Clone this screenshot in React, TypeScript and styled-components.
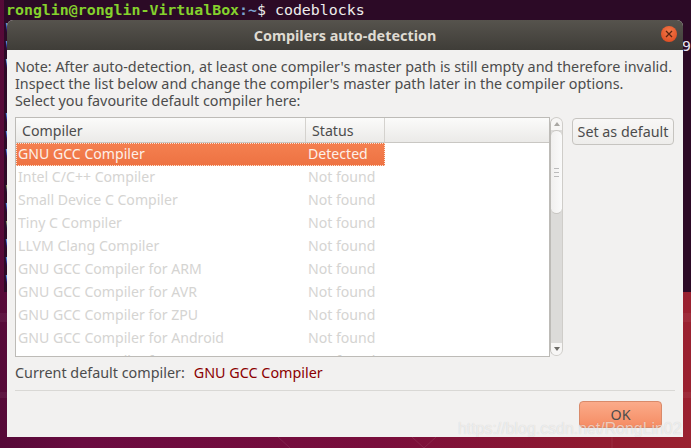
import { createGlobalStyle } from 'styled-components';
import styled from 'styled-components';

const Global = createGlobalStyle`
  html, body { margin: 0; padding: 0; width: 691px; height: 448px; overflow: hidden; }
  #root { width: 691px; height: 448px; }
`;

const Desktop = styled.div`
  position: relative;
  width: 691px;
  height: 448px;
  overflow: hidden;
  background:
    linear-gradient(transparent 313px, rgba(255,255,255,0.05) 313px, rgba(255,255,255,0.05) 322px, transparent 322px),
    linear-gradient(transparent 392px, rgba(255,255,255,0.05) 392px, rgba(255,255,255,0.05) 398px, transparent 398px),
    linear-gradient(90deg, #560a38 0%, #6a0b40 12%, #790e3c 55%, #8f1a30 85%, #9a2130 100%);
`;

const Facets = styled.svg`
  position: absolute;
  left: 0;
  top: 0;
`;

const Terminal = styled.div`
  height: 291px;
  margin: 0 0 0 4px;
  padding: 1px 0 0 2px;
  background: #2c0a26;
  font-family: "DejaVu Sans Mono", monospace;
  font-size: 14.9px;
  line-height: 18px;
  white-space: pre;
  color: #eeeeec;
`;

const Prompt = styled.span`
  color: #85d12d;
  font-weight: 700;
`;

const Path = styled.span`
  color: #7da3cf;
  font-weight: 700;
`;

const OutputLine = styled.div<{ $color: string }>`
  display: flex;
  justify-content: space-between;
  height: 18px;
  color: ${p => p.$color};
`;

const OutputTail = styled.span`
  color: #e4e4f0;
`;

const DialogWindow = styled.div`
  position: absolute;
  left: 7px;
  top: 20px;
  width: 676px;
  height: 417px;
  display: flex;
  flex-direction: column;
  background: #f2f1f0;
  border-radius: 6px 6px 0 0;
  font-family: "Noto Sans", sans-serif;
  color: #4c4c4c;
`;

const TitleBar = styled.div`
  flex: none;
  position: relative;
  height: 30px;
  display: flex;
  align-items: center;
  justify-content: center;
  background: linear-gradient(#56534d, #3f3d38);
  border-radius: 6px 6px 0 0;
  color: #dfdbd2;
  font-size: 14.4px;
  font-weight: 700;
`;

const CloseButton = styled.div`
  position: absolute;
  right: 6px;
  top: 6px;
  width: 16px;
  height: 16px;
  border-radius: 50%;
  background: radial-gradient(circle at 50% 35%, #f47a4a, #d9431a);
  display: flex;
  align-items: center;
  justify-content: center;
`;

const Body = styled.div`
  flex: 1;
  display: flex;
  flex-direction: column;
  padding: 8px 8px 0 8px;
`;

const Note = styled.div`
  font-size: 14.35px;
  line-height: 17px;
  white-space: pre;
`;

const ListRow = styled.div`
  display: flex;
  margin-top: 8px;
`;

const ListBox = styled.div`
  position: relative;
  width: 533px;
  height: 238px;
  flex: none;
  background: #fff;
  border: 1px solid #bdbbb7;
  overflow: hidden;
`;

const HeaderRow = styled.div`
  display: flex;
  height: 24px;
  background: linear-gradient(#fbfbfa, #ebeae8);
  border-bottom: 1px solid #c9c7c3;
`;

const HeaderCell = styled.div<{ $w: number }>`
  width: ${p => p.$w}px;
  flex: none;
  padding-left: 6px;
  box-sizing: border-box;
  border-right: 1px solid #d4d2ce;
  font-size: 14.2px;
  line-height: 25px;
`;

const Row = styled.div<{ $selected?: boolean }>`
  display: flex;
  width: 369px;
  height: 23px;
  box-sizing: border-box;
  font-size: 14.1px;
  line-height: 20px;
  color: ${p => (p.$selected ? '#fdf0e8' : '#d5d4d2')};
  background: ${p => (p.$selected ? 'linear-gradient(#f47f4f, #ee7343)' : 'transparent')};
  border: 1px ${p => (p.$selected ? 'dotted #fbe3d6' : 'solid transparent')};
`;

const NameCell = styled.div`
  width: 290px;
  flex: none;
  padding-left: 1px;
`;

const StatusCell = styled.div`
  flex: 1;
`;

const Scrollbar = styled.div`
  position: relative;
  flex: none;
  width: 13px;
  height: 239px;
  box-sizing: border-box;
  border: 1px solid #cfcdc9;
  border-left-color: #bdbbb7;
  border-radius: 7px;
  background: #dcdbd9;
  overflow: hidden;
`;

const Stepper = styled.div<{ $end: 'top' | 'bottom' }>`
  position: absolute;
  left: 0;
  right: 0;
  height: 12px;
  ${p => (p.$end === 'top' ? 'top: 0;' : 'bottom: 0;')}
  background: #f7f6f5;
  display: flex;
  align-items: center;
  justify-content: center;
  &::after {
    content: '';
    border-left: 3px solid transparent;
    border-right: 3px solid transparent;
    ${p => (p.$end === 'top' ? 'border-bottom: 4px solid #a9a7a3;' : 'border-top: 4px solid #6e6c68;')}
  }
`;

const Thumb = styled.div`
  position: absolute;
  left: 0;
  right: 0;
  top: 12px;
  height: 82px;
  background: linear-gradient(90deg, #f1f0ef, #fafafa);
  border: 1px solid #c8c6c2;
  border-left: none;
  border-right: none;
  border-radius: 6px;
  display: flex;
  align-items: center;
  justify-content: center;
  &::after {
    content: '';
    width: 5px;
    height: 7px;
    border-top: 1px solid #bbb;
    border-bottom: 1px solid #bbb;
    background: linear-gradient(transparent 43%, #bbb 43%, #bbb 57%, transparent 57%);
  }
`;

const SideButton = styled.button`
  margin: 1px 0 0 9px;
  width: 102px;
  height: 27px;
  padding: 0;
  background: linear-gradient(#f8f7f6, #eeedeb);
  border: 1px solid #c6c4c0;
  border-radius: 4px;
  font-family: inherit;
  font-size: 14.3px;
  color: #4c4c4c;
`;

const CurrentRow = styled.div`
  display: flex;
  gap: 9px;
  margin-top: 6px;
  font-size: 14.35px;
  line-height: 20px;
`;

const CurrentValue = styled.span`
  color: #8b0000;
`;

const Divider = styled.div`
  margin-top: 7px;
  height: 1px;
  background: #d9d8d5;
`;

const Footer = styled.div`
  display: flex;
  justify-content: flex-end;
  padding: 10px 13px 0 0;
`;

const OkButton = styled.button`
  width: 83px;
  height: 27px;
  padding: 0;
  background: linear-gradient(#fbab8a, #f58c63);
  border: 1px solid #d98a6a;
  border-radius: 4px;
  font-family: inherit;
  font-size: 14.3px;
  color: #4c4c4c;
`;

const Watermark = styled.div`
  position: absolute;
  left: 458px;
  top: 419px;
  font-family: "Liberation Sans", sans-serif;
  font-size: 15.9px;
  line-height: 20px;
  white-space: pre;
  color: rgba(255, 255, 255, 0.6);
  text-shadow: 0 0 1px rgba(0, 0, 0, 0.16);
`;

const compilers = [
  'Intel C/C++ Compiler',
  'Small Device C Compiler',
  'Tiny C Compiler',
  'LLVM Clang Compiler',
  'GNU GCC Compiler for ARM',
  'GNU GCC Compiler for AVR',
  'GNU GCC Compiler for ZPU',
  'GNU GCC Compiler for Android',
  'GNU GCC Compiler for Renesas',
];

// what is left of the terminal output behind the dialog
const BLUE = '#7da3cf';
const WHITE = '#d8d8d8';
const ORANGE = '#c9a060';
const output = [BLUE, BLUE, WHITE, '', '', BLUE, BLUE, BLUE, '', ORANGE, BLUE, ORANGE, BLUE, BLUE, BLUE];

export default function App() {
  return (
    <Desktop>
      <Global />
      <Facets width="691" height="448" viewBox="0 0 691 448">
        <path d="M278 437l12 11M412 437l12 11M424 448l12-11M612 437v11" stroke="rgba(255,255,255,0.09)" fill="none" />
      </Facets>
      <Terminal>
        <Prompt>ronglin@ronglin-VirtualBox</Prompt>
        <Path>:~</Path>$ codeblocks
        {output.map((color, i) => (
          <OutputLine key={i} $color={color || 'transparent'}>
            <span>W</span>
            {i === 1 && <OutputTail>9</OutputTail>}
          </OutputLine>
        ))}
      </Terminal>
      <DialogWindow>
        <TitleBar>
          Compilers auto-detection
          <CloseButton>
            <svg width="8" height="8" viewBox="0 0 8 8">
              <path d="M1 1l6 6M7 1L1 7" stroke="#5a2410" strokeWidth="1.3" fill="none" />
            </svg>
          </CloseButton>
        </TitleBar>
        <Body>
          <Note>
            {"Note: After auto-detection, at least one compiler's master path is still empty and therefore invalid.\nInspect the list below and change the compiler's master path later in the compiler options.\nSelect you favourite default compiler here:"}
          </Note>
          <ListRow>
            <ListBox>
              <HeaderRow>
                <HeaderCell $w={290}>Compiler</HeaderCell>
                <HeaderCell $w={79}>Status</HeaderCell>
              </HeaderRow>
              <Row $selected>
                <NameCell>GNU GCC Compiler</NameCell>
                <StatusCell>Detected</StatusCell>
              </Row>
              {compilers.map(name => (
                <Row key={name}>
                  <NameCell>{name}</NameCell>
                  <StatusCell>Not found</StatusCell>
                </Row>
              ))}
            </ListBox>
            <Scrollbar>
              <Stepper $end="top" />
              <Thumb />
              <Stepper $end="bottom" />
            </Scrollbar>
            <SideButton>Set as default</SideButton>
          </ListRow>
          <CurrentRow>
            <span>Current default compiler:</span>
            <CurrentValue>GNU GCC Compiler</CurrentValue>
          </CurrentRow>
          <Divider />
          <Footer>
            <OkButton>OK</OkButton>
          </Footer>
        </Body>
      </DialogWindow>
      <Watermark>https://blog.csdn.net/RongLin02</Watermark>
    </Desktop>
  );
}
